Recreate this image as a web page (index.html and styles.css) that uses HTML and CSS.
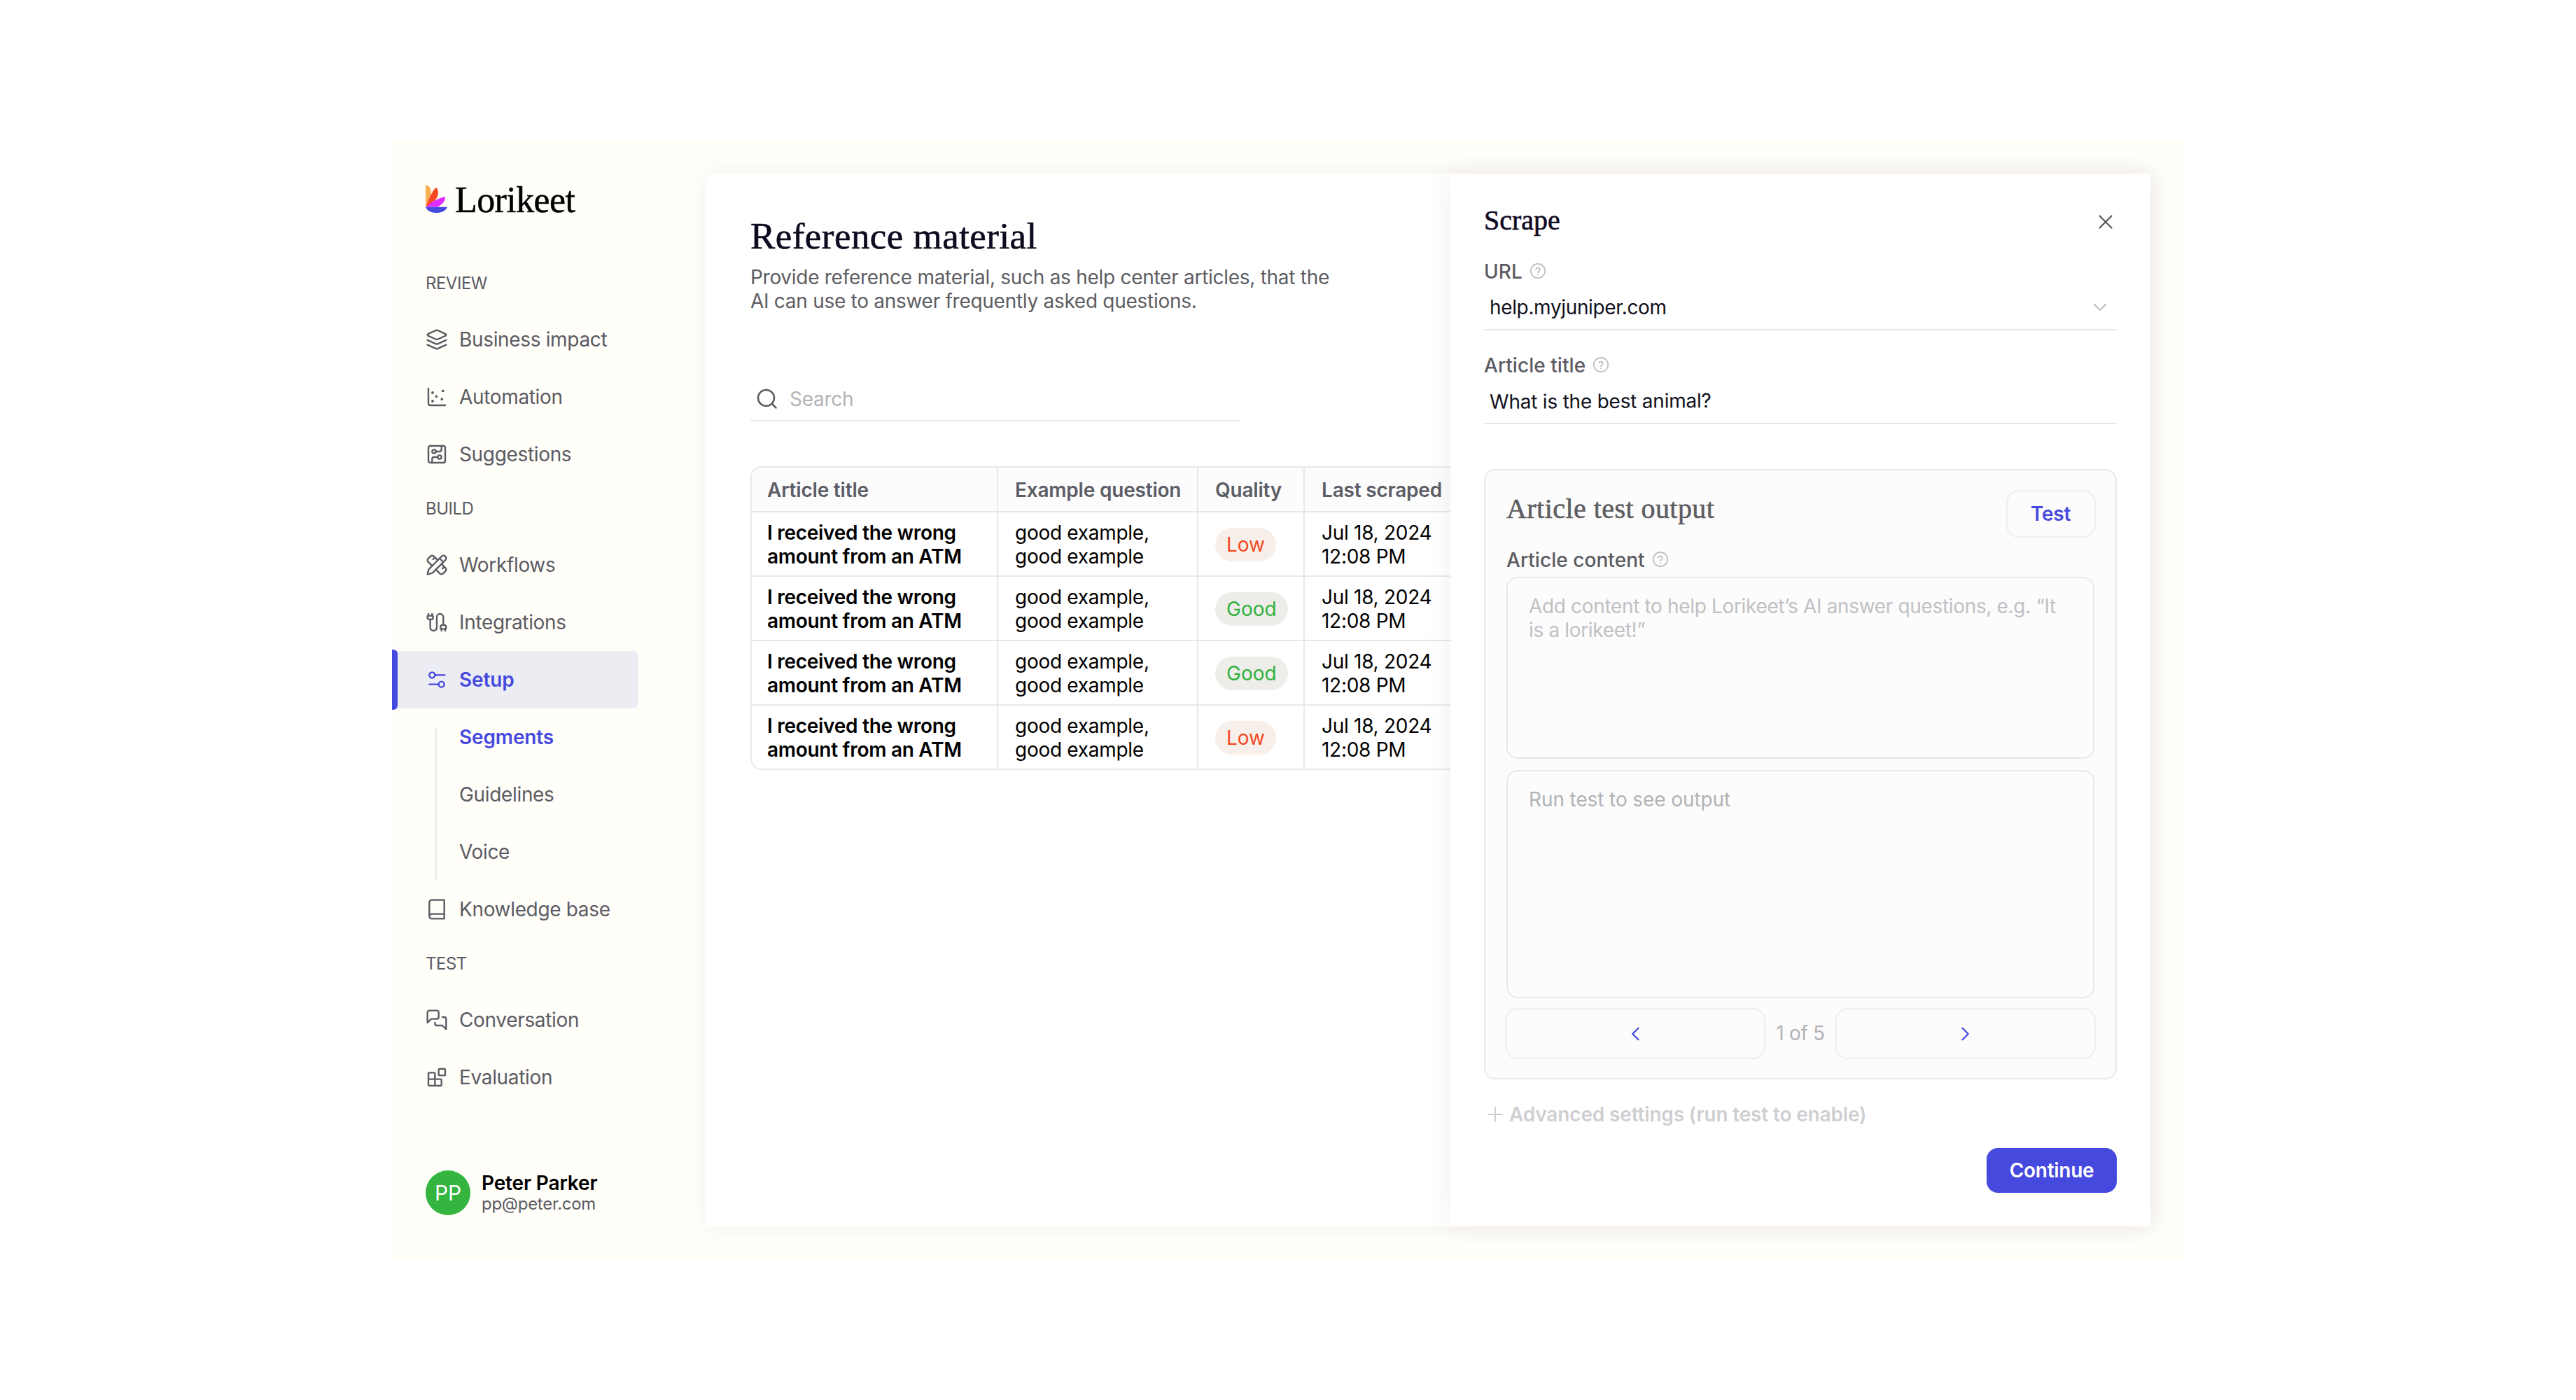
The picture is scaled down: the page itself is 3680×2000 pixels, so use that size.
FILE: index.html
```html
<!DOCTYPE html>
<html lang="en">
<head>
<meta charset="utf-8">
<title>Lorikeet – Reference material</title>
<link rel="stylesheet" href="styles.css">
</head>
<body>
<svg class="defs" aria-hidden="true">
  <symbol id="help" viewBox="0 0 24 24">
    <circle cx="12" cy="12" r="10.2"/>
    <path d="M9.2 9.4a2.9 2.9 0 0 1 5.6.9c0 1.9-2.8 2.4-2.8 4M12 17.3v.1"/>
  </symbol>
</svg>
<div class="app">
  <aside class="sidebar">
    <div class="logo">
      <svg class="logo-mark" viewBox="0 0 31 40">
        <path fill="#fab055" d="M0 0C5 .5 8 5.500 8 12C8 18 4 25 0 31.500Z"/>
        <path fill="#f54a21" d="M14.500 4C17.500 5 18.500 10 17.500 15C16 21.500 9 26 .500 31.500C4 22 8 11 14.500 4Z"/>
        <path fill="#e02dff" d="M28 17C28.500 22 25 27.500 17 31.700H.500C7 25 18 19 28 17Z"/>
        <path fill="#4649de" d="M0 31.700H31C29 37 23 40 15.500 40S2 37 0 31.700Z"/>
      </svg>
      <span class="logo-text">Lorikeet</span>
    </div>
    <nav class="nav">
      <div class="nav-label">REVIEW</div>
      <a class="nav-item"><svg class="icon" viewBox="0 0 24 24"><path d="m12.830 2.180a2 2 0 0 0-1.660 0L2.600 6.080a1 1 0 0 0 0 1.830l8.580 3.910a2 2 0 0 0 1.660 0l8.580-3.900a1 1 0 0 0 0-1.830Z"/><path d="m22 17.650-9.170 4.160a2 2 0 0 1-1.660 0L2 17.650"/><path d="m22 12.650-9.170 4.160a2 2 0 0 1-1.660 0L2 12.650"/></svg>Business impact</a>
      <a class="nav-item"><svg class="icon" viewBox="0 0 24 24"><g stroke-width="1.300"><circle cx="7.500" cy="7.500" r=".8"/><circle cx="18.500" cy="5.500" r=".8"/><circle cx="11.500" cy="11.500" r=".8"/><circle cx="7.500" cy="16.500" r=".8"/><circle cx="17.500" cy="14.500" r=".8"/></g><path d="M3 3v16a2 2 0 0 0 2 2h16"/></svg>Automation</a>
      <a class="nav-item"><svg class="icon" viewBox="0 0 24 24"><rect x="3" y="3" width="18" height="18" rx="2"/><path d="M11 9h4a2 2 0 0 0 2-2V3"/><circle cx="9" cy="9" r="2"/><path d="M7 21v-4a2 2 0 0 1 2-2h4"/><circle cx="15" cy="15" r="2"/></svg>Suggestions</a>
      <div class="nav-label">BUILD</div>
      <a class="nav-item"><svg class="icon" viewBox="0 0 24 24"><path d="M13 7 8.700 2.700a2.410 2.410 0 0 0-3.400 0L2.700 5.300a2.410 2.410 0 0 0 0 3.400L7 13"/><path d="m8 6 2-2"/><path d="m18 16 2-2"/><path d="m17 11 4.300 4.300c.94.940.940 2.460 0 3.400l-2.600 2.600c-.94.940-2.460.940-3.400 0L11 17"/><path d="M21.174 6.812a1 1 0 0 0-3.986-3.987L3.842 16.174a2 2 0 0 0-.5.830l-1.321 4.352a.5.500 0 0 0 .623.622l4.353-1.320a2 2 0 0 0 .830-.497Z"/><path d="m15 5 4 4"/></svg>Workflows</a>
      <a class="nav-item"><svg class="icon" viewBox="0 0 24 24"><path d="M17 21v-2a1 1 0 0 1-1-1v-1a2 2 0 0 1 2-2h2a2 2 0 0 1 2 2v1a1 1 0 0 1-1 1v2"/><path d="M19 15V6.500a1 1 0 0 0-7 0v11a1 1 0 0 1-7 0V9"/><path d="M21 21v-2h-4"/><path d="M3 5V3"/><path d="M4 9a2 2 0 0 1-2-2V6a1 1 0 0 1 1-1h4a1 1 0 0 1 1 1v1a2 2 0 0 1-2 2z"/><path d="M7 5V3"/></svg>Integrations</a>
      <a class="nav-item active"><svg class="icon" viewBox="0 0 24 24"><path d="M20.500 7H10"/><path d="M14 17H4"/><circle cx="17" cy="17" r="3"/><circle cx="7" cy="7" r="3"/></svg>Setup</a>
      <div class="subnav">
        <a class="nav-item current">Segments</a>
        <a class="nav-item">Guidelines</a>
        <a class="nav-item">Voice</a>
      </div>
      <a class="nav-item"><svg class="icon" viewBox="0 0 24 24"><path d="M4 19.500v-15A2.500 2.500 0 0 1 6.500 2H20v20H6.500a2.500 2.500 0 0 1 0-5H20"/></svg>Knowledge base</a>
      <div class="nav-label">TEST</div>
      <a class="nav-item"><svg class="icon" viewBox="0 0 24 24"><path d="M14 9a2 2 0 0 1-2 2H6l-4 4V4a2 2 0 0 1 2-2h8a2 2 0 0 1 2 2z"/><path d="M18 9h2a2 2 0 0 1 2 2v11l-4-4h-6a2 2 0 0 1-2-2v-1"/></svg>Conversation</a>
      <a class="nav-item"><svg class="icon" viewBox="0 0 24 24"><rect x="14" y="3" width="7" height="7" rx="1"/><path d="M10 21V8a1 1 0 0 0-1-1H4a1 1 0 0 0-1 1v12a1 1 0 0 0 1 1h12a1 1 0 0 0 1-1v-5a1 1 0 0 0-1-1H3"/></svg>Evaluation</a>
    </nav>
    <div class="user">
      <div class="avatar">PP</div>
      <div class="user-info">
        <div class="user-name">Peter Parker</div>
        <div class="user-mail">pp@peter.com</div>
      </div>
    </div>
  </aside>

  <div class="workspace">
    <main class="page">
      <h1 class="page-title">Reference material</h1>
      <p class="page-intro">Provide reference material, such as help center articles, that the<br>AI can use to answer frequently asked questions.</p>
      <div class="search">
        <svg class="search-icon" viewBox="0 0 30 30"><circle cx="13.500" cy="13.500" r="11.500"/><path d="m22 22 5.500 5.500"/></svg>
        Search
      </div>
      <div class="table">
        <div class="row head"><div>Article title</div><div>Example question</div><div>Quality</div><div>Last scraped</div></div>
        <div class="row"><div class="strong">I received the wrong<br>amount from an ATM</div><div>good example,<br>good example</div><div><span class="badge low">Low</span></div><div>Jul 18, 2024<br>12:08 PM</div></div>
        <div class="row"><div class="strong">I received the wrong<br>amount from an ATM</div><div>good example,<br>good example</div><div><span class="badge good">Good</span></div><div>Jul 18, 2024<br>12:08 PM</div></div>
        <div class="row"><div class="strong">I received the wrong<br>amount from an ATM</div><div>good example,<br>good example</div><div><span class="badge good">Good</span></div><div>Jul 18, 2024<br>12:08 PM</div></div>
        <div class="row"><div class="strong">I received the wrong<br>amount from an ATM</div><div>good example,<br>good example</div><div><span class="badge low">Low</span></div><div>Jul 18, 2024<br>12:08 PM</div></div>
      </div>
    </main>

    <section class="panel">
      <header class="panel-head">
        <h2 class="panel-title">Scrape</h2>
        <svg class="close" viewBox="0 0 20 20"><path d="m1.500 1.500 17 17M18.500 1.500l-17 17"/></svg>
      </header>
      <div class="field">
        <div class="label">URL <svg class="help"><use href="#help"/></svg></div>
        <div class="input">help.myjuniper.com <svg class="chevron" viewBox="0 0 20 12"><path d="m1.500 1.500 8.500 8.500 8.500-8.500"/></svg></div>
      </div>
      <div class="field">
        <div class="label">Article title <svg class="help"><use href="#help"/></svg></div>
        <div class="input"><span class="typed">What is the best animal?</span></div>
      </div>
      <div class="test-box">
        <div class="test-head">
          <h3 class="test-title">Article test output</h3>
          <button class="btn test-btn">Test</button>
        </div>
        <div class="label content-label">Article content <svg class="help"><use href="#help"/></svg></div>
        <div class="area content-area">Add content to help Lorikeet’s AI answer questions, e.g. “It<br>is a lorikeet!”</div>
        <div class="area output-area">Run test to see output</div>
        <div class="pager">
          <button class="btn"><svg class="arrow" viewBox="0 0 12 20"><path d="M10.500 1.800 2.300 10l8.200 8.200"/></svg></button>
          <span class="pager-text">1 of 5</span>
          <button class="btn"><svg class="arrow" viewBox="0 0 12 20"><path d="M1.500 1.800 9.700 10l-8.200 8.200"/></svg></button>
        </div>
      </div>
      <div class="advanced"><svg class="plus" viewBox="0 0 22 22"><path d="M11 1v20M1 11h20"/></svg>Advanced settings (run test to enable)</div>
      <button class="continue">Continue</button>
    </section>
  </div>
</div>
</body>
</html>
```
FILE: styles.css
```css
* { box-sizing: border-box; }

body {
  margin: 0;
  width: 3680px;
  height: 2000px;
  padding: 200px 560px;
  background: #fff;
  color: #000;
  font: 28px/34px Inter, sans-serif;
  letter-spacing: -0.28px;
}

h1, h2, h3, p { margin: 0; }
svg { fill: none; stroke: currentColor; stroke-linecap: round; stroke-linejoin: round; flex: none; }
button { font: inherit; letter-spacing: inherit; margin: 0; padding: 0; border: 0; background: none; }

.defs { display: none; }

.app {
  display: flex;
  width: 2560px;
  height: 1600px;
  background: #fffef9;
  overflow: hidden;
}

/* Sidebar */
.sidebar {
  display: flex;
  flex-direction: column;
  width: 448px;
  padding: 64px 0;
  color: #5b5b64;
}

.logo {
  display: flex;
  align-items: flex-start;
  gap: 11px;
  height: 40px;
  padding-left: 48px;
}
.logo-mark { width: 31px; height: 40px; stroke: none; }
.logo-text {
  font: 52px/43px "Liberation Serif", serif;
  letter-spacing: -0.6px;
  color: #000;
  -webkit-text-stroke: 0.5px #000;
}

.nav { margin-top: 64px; }
.nav-label {
  height: 76px;
  padding-left: 48px;
  font-size: 24px;
  line-height: 73px;
  letter-spacing: -0.5px;
}
.nav-item {
  display: flex;
  align-items: center;
  gap: 16px;
  height: 82px;
  width: 352px;
  padding-left: 48px;
  letter-spacing: -0.34px;
}
.icon { width: 32px; height: 32px; stroke-width: 1.8; }

.active {
  position: relative;
  border-radius: 0 8px 8px 0;
  background: #ecedf3;
  color: #4649de;
  font-weight: 600;
  letter-spacing: -0.15px;
}
.active::before {
  content: "";
  position: absolute;
  left: 0;
  top: -2px;
  bottom: -2px;
  width: 8px;
  border-radius: 0 6px 6px 0;
  background: #4649de;
}

.subnav { position: relative; }
.subnav::before {
  content: "";
  position: absolute;
  left: 62px;
  top: 28px;
  bottom: 0;
  width: 2px;
  background: #e9e9eb;
}
.subnav .nav-item { padding-left: 96px; }
.subnav .current { color: #4649de; font-weight: 600; letter-spacing: -0.15px; }

.user {
  display: flex;
  align-items: center;
  gap: 16px;
  height: 64px;
  margin-top: auto;
  padding-left: 48px;
}
.avatar {
  width: 64px;
  height: 64px;
  border-radius: 50%;
  background: #33b540;
  color: #fff;
  font-size: 30px;
  line-height: 65px;
  text-align: center;
}
.user-name { color: #000; font-weight: 600; line-height: 32px; letter-spacing: -0.15px; }
.user-mail { font-size: 24px; line-height: 28px; }

/* Main page */
.workspace {
  display: flex;
  width: 2064px;
  height: 1504px;
  margin-top: 48px;
  border-radius: 16px 0 0 0;
  background: #fff;
  box-shadow: 0 0 32px rgba(50, 40, 50, 0.06);
}
.page {
  width: 1064px;
  padding: 62px 0 0 64px;
  overflow: hidden;
}
.page-title {
  font: 53px/54px "Liberation Serif", serif;
  letter-spacing: 0.45px;
  color: #0e0a1f;
  -webkit-text-stroke: 0.6px #0e0a1f;
}
.page-intro { margin-top: 15px; color: #5d5d62; }

.search {
  display: flex;
  align-items: center;
  gap: 17px;
  width: 700px;
  height: 66px;
  margin-top: 89px;
  padding: 3px 0 0 9px;
  border-bottom: 2px solid #e8e8ea;
  color: #b3b3b6;
}
.search-icon { width: 30px; height: 30px; color: #5d5d62; stroke-width: 2.5; }

.table {
  width: 1100px;
  margin-top: 64px;
  border: 2px solid #e8e8ea;
  border-radius: 16px;
  overflow: hidden;
}
.row {
  display: grid;
  grid-template-columns: 352px 286px 152px 308px;
  height: 92px;
  border-bottom: 2px solid #e8e8ea;
}
.row:last-child { border-bottom: 0; height: 90px; }
.row > div {
  display: flex;
  align-items: center;
  padding: 1px 0 0 24px;
  border-right: 2px solid #e8e8ea;
}
.row > div:first-child { padding-left: 22px; }
.row.head {
  height: 64px;
  background: #fcfcfd;
  color: #5d5d65;
  font-weight: 600;
  letter-spacing: -0.2px;
}
.strong { font-weight: 600; }
.badge {
  height: 48px;
  padding: 0 16px;
  border-radius: 24px;
  line-height: 48px;
  letter-spacing: 0;
}
.low { background: #f7efe9; color: #f5481f; }
.good { background: #efedea; color: #2fb23c; }

/* Scrape panel */
.panel {
  display: flex;
  flex-direction: column;
  width: 1000px;
  height: 1504px;
  padding: 46px 48px 48px;
  background: #fff;
  box-shadow: 0 0 36px rgba(80, 20, 40, 0.07);
  z-index: 1;
}
.panel-head {
  display: flex;
  justify-content: space-between;
  align-items: center;
  height: 46px;
  padding-right: 6px;
}
.panel-title {
  height: 46px;
  font: 40px/41px "Liberation Serif", serif;
  letter-spacing: 0;
  color: #0e0a1f;
  -webkit-text-stroke: 0.6px #0e0a1f;
}
.close { width: 20px; height: 20px; color: #55555c; stroke-width: 2.2; }

.field { height: 134px; padding-top: 30px; }
.label {
  display: flex;
  align-items: center;
  gap: 10px;
  height: 36px;
  color: #5b5b61;
  font-weight: 500;
  letter-spacing: 0.05px;
}
.help { width: 24px; height: 24px; color: #bcbcc0; stroke-width: 1.7; margin-top: -2px; }
.input {
  display: flex;
  justify-content: space-between;
  align-items: center;
  height: 66px;
  padding: 1px 14px 0 8px;
  border-bottom: 2px solid #e8e8ea;
  color: #11111d;
  letter-spacing: -0.35px;
}
.typed { transform: rotate(-0.3deg); letter-spacing: -0.22px; }
.chevron { width: 20px; height: 12px; color: #bcbcc0; stroke-width: 2; }

.test-box {
  height: 872px;
  margin-top: 62px;
  padding: 28px 30px;
  border: 2px solid #e9e9eb;
  border-radius: 16px;
  background: #fcfcfc;
}
.test-head { display: flex; justify-content: space-between; margin-right: -2px; height: 68px; }
.test-title {
  font: 40px/54px "Liberation Serif", serif;
  letter-spacing: 0.45px;
  color: #5d5d62;
  -webkit-text-stroke: 0.6px #5d5d62;
}
.btn {
  display: flex;
  align-items: center;
  justify-content: center;
  border: 2px solid #eeeef3;
  border-radius: 18px;
  color: #4649de;
}
.test-btn { width: 128px; padding-right: 1px; font-weight: 600; }
.content-label { margin-top: 14px; height: 36px; }
.area {
  padding: 23px 30px;
  border: 2px solid #e8e8ea;
  border-radius: 16px;
  color: #b2b2b6;
  letter-spacing: -0.1px;
}
.content-area { margin-top: 6px; height: 260px; color: #c0c0c4; letter-spacing: -0.34px; }
.output-area { margin-top: 16px; height: 326px; }
.pager {
  display: grid;
  grid-template-columns: 1fr 100px 1fr;
  margin: 14px -2px 0;
  height: 72px;
}
.pager-text { line-height: 73px; text-align: center; color: #b2b2b6; }
.arrow { width: 12px; height: 20px; stroke-width: 2.3; }

.advanced {
  display: flex;
  align-items: center;
  gap: 9px;
  height: 36px;
  margin-top: 32px;
  padding-left: 5px;
  color: #cfcfd2;
  font-weight: 600;
  letter-spacing: -0.16px;
}
.plus { width: 22px; height: 22px; stroke-width: 2; }
.continue {
  align-self: flex-end;
  width: 186px;
  height: 64px;
  margin-top: 30px;
  border-radius: 16px;
  background: #4649de;
  color: #fff;
  font-weight: 600;
}
```
